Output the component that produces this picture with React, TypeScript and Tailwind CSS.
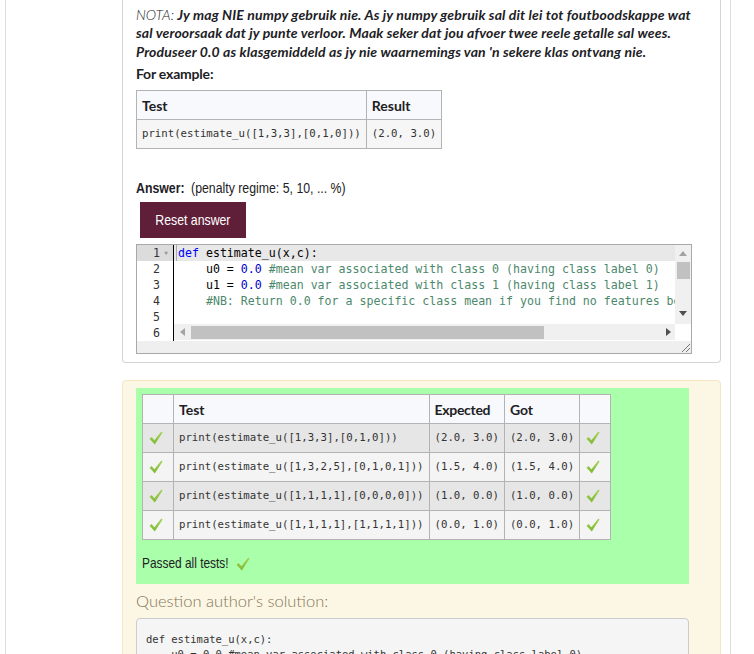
import React from "react";

const Tick = ({ className = "" }: { className?: string }) => (
  <svg width="14" height="14" viewBox="0 0 14 14" className={className}>
    <defs>
      <linearGradient id="tg" x1="0" y1="0" x2="0" y2="1">
        <stop offset="0" stopColor="#a6d35a" />
        <stop offset="1" stopColor="#7fba34" />
      </linearGradient>
    </defs>
    <polygon points="0.5,7.8 2.6,6 5.4,9.2 12.3,0.6 13.6,1.6 5.8,13.4" fill="url(#tg)" />
  </svg>
);

const mono = "font-['DejaVu_Sans_Mono',monospace]";
const arial = "font-['Liberation_Sans',Arial,sans-serif]";

const tests = [
  ["print(estimate_u([1,3,3],[0,1,0]))", "(2.0, 3.0)", "(2.0, 3.0)"],
  ["print(estimate_u([1,3,2,5],[0,1,0,1]))", "(1.5, 4.0)", "(1.5, 4.0)"],
  ["print(estimate_u([1,1,1,1],[0,0,0,0]))", "(1.0, 0.0)", "(1.0, 0.0)"],
  ["print(estimate_u([1,1,1,1],[1,1,1,1]))", "(0.0, 1.0)", "(0.0, 1.0)"],
];

export default function App() {
  return (
    <div className="w-[754px] h-[654px] overflow-hidden bg-white font-['Lato',sans-serif] text-[#1d2125]">
      <div className="ml-[5px] w-[726px] h-full border-x border-[#dedede] pl-[116px]">
        {/* Question card */}
        <div className="w-[599px] border border-t-0 border-[#d4d4d4] rounded-b-[4px] px-[13px] pt-[6px] pb-[8px]">
          <p className="text-[14px] leading-[18.4px] italic whitespace-nowrap">
            <span className="font-light">NOTA:</span>{" "}
            <b className="font-bold tracking-[0.15px]">
              Jy mag NIE numpy gebruik nie. As jy numpy gebruik sal dit lei tot foutboodskappe wat
              <br />
              sal veroorsaak dat jy punte verloor. Maak seker dat jou afvoer twee reele getalle sal wees.
              <br />
              Produseer 0.0 as klasgemiddeld as jy nie waarnemings van 'n sekere klas ontvang nie.
            </b>
          </p>
          <div className="mt-[4px] text-[14px] leading-[18px] font-bold tracking-[-0.2px]">For example:</div>
          <table className="mt-[7px] border-collapse text-[14px]">
            <thead>
              <tr className="bg-[#f8f9fc] h-[29px]">
                <th className="border border-[#b3b3b3] px-[5px] text-left font-bold">Test</th>
                <th className="border border-[#b3b3b3] px-[5px] text-left font-bold">Result</th>
              </tr>
            </thead>
            <tbody>
              <tr className="bg-[#f6f6f6] h-[29px]">
                <td className={`border border-[#b3b3b3] px-[5px] text-[10.7px] text-[#333] ${mono}`}>
                  print(estimate_u([1,3,3],[0,1,0]))
                </td>
                <td className={`border border-[#b3b3b3] px-[5px] text-[10.7px] text-[#333] ${mono}`}>
                  (2.0, 3.0)
                </td>
              </tr>
            </tbody>
          </table>

          <div
            className={`mt-[29px] leading-[20px] whitespace-nowrap origin-left scale-x-[0.82] text-[15px] ${arial}`}
          >
            <span className="font-bold">Answer:</span>
            <span className="ml-[8px]">(penalty regime: 5, 10, ... %)</span>
          </div>
          <button className={`ml-[4px] mt-[4px] w-[106px] h-[36px] bg-[#5f1f39] text-white text-[15px] ${arial}`}>
            <span className="inline-block whitespace-nowrap scale-x-[0.82]">Reset answer</span>
          </button>

          {/* Editor */}
          <div className="mt-[6px] w-[556px] h-[110px] border border-[#a9a9a9] bg-[#efefef] flex flex-col">
            <div className="relative h-[96px] flex bg-white overflow-hidden">
              <div
                className={`w-[37px] shrink-0 border-r border-black text-[11.6px] leading-[16px] text-[#333] ${mono}`}
              >
                {[1, 2, 3, 4, 5, 6].map((n) => (
                  <div
                    key={n}
                    className={`h-[16px] flex items-center justify-end pr-[1px] ${n === 1 ? "bg-[#dcdcdc]" : ""}`}
                  >
                    <span>{n}</span>
                    <span className="w-[12px] text-[6px] text-[#999] text-center">{n === 1 ? "▼" : ""}</span>
                  </div>
                ))}
              </div>
              <div className={`flex-1 min-w-0 text-[11.6px] leading-[16px] whitespace-pre text-black ${mono}`}>
                <div className="h-[16px] bg-[#e8e8e8] flex">
                  <span className="w-[1px] h-[16px] bg-[#aaa] ml-[2px] mr-[1px]" />
                  <span>
                    <span className="text-[#0000ff]">def</span> estimate_u(x,c):
                  </span>
                </div>
                <div className="h-[16px] pl-[4px]">
                  {"    u0 = "}
                  <span className="text-[#0000cd]">0.0</span>
                  <span className="text-[#4c886b]"> #mean var associated with class 0 (having class label 0)</span>
                </div>
                <div className="h-[16px] pl-[4px]">
                  {"    u1 = "}
                  <span className="text-[#0000cd]">0.0</span>
                  <span className="text-[#4c886b]"> #mean var associated with class 1 (having class label 1)</span>
                </div>
                <div className="h-[16px] pl-[4px] text-[#4c886b]">
                  {"    #NB: Return 0.0 for a specific class mean if you find no features belonging to it"}
                </div>
              </div>
              {/* vertical scrollbar */}
              <div className="absolute right-0 top-0 w-[16px] h-[79px] bg-[#f0f0f0] flex flex-col items-center">
                <svg width="8" height="5" viewBox="0 0 8 5" className="mt-[6px]">
                  <polygon points="0,5 8,5 4,0" fill="#a3a3a3" />
                </svg>
                <div className="mt-[6px] w-[13px] h-[17px] bg-[#c1c1c1]" />
                <svg width="8" height="5" viewBox="0 0 8 5" className="mt-[32px]">
                  <polygon points="0,0 8,0 4,5" fill="#505050" />
                </svg>
              </div>
              {/* horizontal scrollbar */}
              <div className="absolute left-[37px] right-[16px] top-[79px] h-[16px] bg-[#f0f0f0] flex items-center">
                <svg width="5" height="8" viewBox="0 0 5 8" className="ml-[6px]">
                  <polygon points="5,0 5,8 0,4" fill="#a3a3a3" />
                </svg>
                <div className="ml-[6px] w-[353px] h-[13px] bg-[#c1c1c1]" />
                <div className="flex-1" />
                <svg width="5" height="8" viewBox="0 0 5 8" className="mr-[4px]">
                  <polygon points="0,0 0,8 5,4" fill="#505050" />
                </svg>
              </div>
              <div className="absolute right-0 top-[79px] w-[16px] h-[17px] bg-white" />
            </div>
            <div className="flex-1 flex justify-end items-end">
              <svg width="10" height="10" viewBox="0 0 10 10" className="mr-[1px] mb-[1px]">
                <line x1="2" y1="10" x2="10" y2="2" stroke="#777" strokeWidth="1" />
                <line x1="6" y1="10" x2="10" y2="6" stroke="#777" strokeWidth="1" />
              </svg>
            </div>
          </div>
        </div>

        {/* Results card */}
        <div className="mt-[17px] w-[599px] h-[300px] border border-[#f5e6c4] bg-[#fcf7e4] rounded-[4px] px-[13px] pt-[7px]">
          <div className="w-[553px] bg-[#aaffaa] pl-[6px] pt-[6px] pb-[10px]">
            <table className="border-collapse text-[14px]">
              <thead>
                <tr className="bg-[#f8f9fc] h-[29px]">
                  <th className="border border-[#b3b3b3] w-[31px]" />
                  <th className="border border-[#b3b3b3] px-[5px] text-left font-bold">Test</th>
                  <th className="border border-[#b3b3b3] px-[5px] text-left font-bold tracking-[-0.3px]">Expected</th>
                  <th className="border border-[#b3b3b3] px-[5px] text-left font-bold">Got</th>
                  <th className="border border-[#b3b3b3] w-[31px]" />
                </tr>
              </thead>
              <tbody>
                {tests.map((t, i) => (
                  <tr key={i} className={`h-[29px] ${i % 2 === 0 ? "bg-[#e6e6e6]" : "bg-[#f4f4f4]"}`}>
                    <td className="border border-[#b3b3b3] px-[6px]">
                      <Tick className="block" />
                    </td>
                    <td className={`border border-[#b3b3b3] px-[5px] text-[10.7px] text-[#333] ${mono}`}>{t[0]}</td>
                    <td className={`border border-[#b3b3b3] px-[5px] text-[10.7px] text-[#333] ${mono}`}>{t[1]}</td>
                    <td className={`border border-[#b3b3b3] px-[5px] text-[10.7px] text-[#333] ${mono}`}>{t[2]}</td>
                    <td className="border border-[#b3b3b3] px-[6px]">
                      <Tick className="block" />
                    </td>
                  </tr>
                ))}
              </tbody>
            </table>
            <div className={`mt-[14px] h-[20px] flex items-center text-[14.5px] ${arial}`}>
              <span className="w-[87px] whitespace-nowrap">
                <span className="inline-block origin-left scale-x-[0.82]">Passed all tests!</span>
              </span>
              <Tick className="ml-[7px]" />
            </div>
          </div>
          <div className="mt-[6px] text-[16.5px] leading-[22px] font-light text-[#86765a]">
            Question author's solution:
          </div>
          <div
            className={`mt-[6px] w-[553px] bg-[#f5f5f5] border border-[#cccccc] rounded-[4px] px-[9px] pt-[13px] text-[10.5px] leading-[14.5px] text-[#333] whitespace-pre ${mono}`}
          >
            {"def estimate_u(x,c):\n    u0 = 0.0 #mean var associated with class 0 (having class label 0)"}
          </div>
        </div>
      </div>
    </div>
  );
}
